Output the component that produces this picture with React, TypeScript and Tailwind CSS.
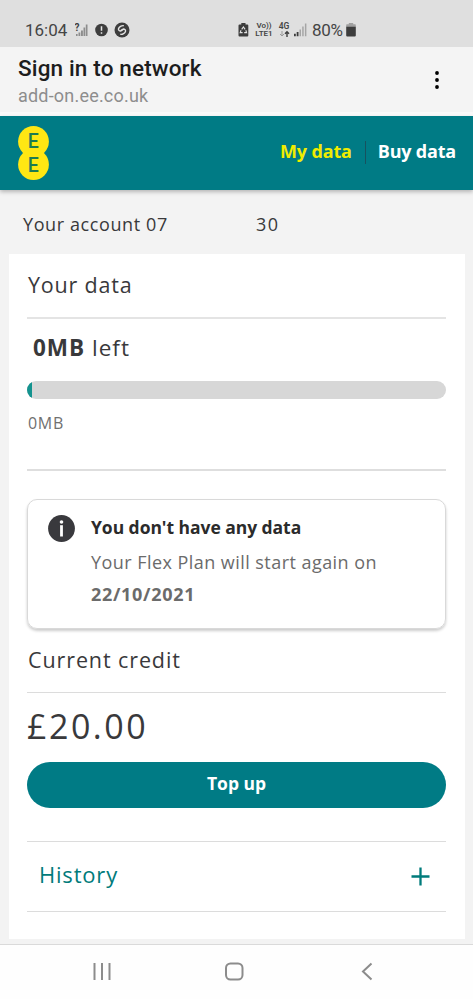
import { EllipsisVertical } from "lucide-react";

function StatusBar() {
  return (
    <div className="flex h-[47px] items-center bg-[#dfdfdf] pt-[13px] pl-[25px] text-[#454545]">
      <span className="w-[50px] text-[17px] leading-5">16:04</span>
      <svg width="13" height="14" viewBox="0 0 13 14" className="shrink-0">
        <path d="M1 12.9h1.6V11H1zM3.5 12.9V9.5h1.8v3.4zM6 12.9V7.5h1.9v5.4zM8.5 12.9V4.5h1.7v8.4zM10.8 12.9V1.5h1.7v11.4z" fill="#8d8d8d" />
        <text x="-0.5" y="7.5" fontSize="10" fontWeight="700" fill="#3d3d3d">?</text>
      </svg>
      <svg width="13" height="14" viewBox="0 0 13 14" className="ml-[7px] shrink-0">
        <circle cx="6.5" cy="7" r="6.3" fill="#3d3d3d" />
        <path d="M6.5 3.3v4.4M6.5 9.3v1.4" stroke="#e9e9e9" strokeWidth="1.5" />
      </svg>
      <svg width="16" height="16" viewBox="0 0 16 16" className="ml-[6px] shrink-0">
        <circle cx="8" cy="8" r="7.5" fill="#3d3d3d" />
        <path d="M9.8 3.7C7.6 3.3 5 5 4.5 6.8c-.4 1.5 1.2 2.5 2.5 2 .9-.3 1.7-1 2.5-1.6M6.3 12.3c2.2.4 4.8-1.2 5.2-3 .4-1.6-1.2-2.6-2.5-2.1-.9.3-1.7 1-2.5 1.6" fill="none" stroke="#e4e4e4" strokeWidth="1.4" />
      </svg>
      <svg width="11" height="14" viewBox="0 0 11 14" className="ml-[108px] shrink-0">
        <path d="M3.3 0h4.2v1.4h1.8a1 1 0 0 1 1 1v10.2a1 1 0 0 1-1 1H1.5a1 1 0 0 1-1-1V2.4a1 1 0 0 1 1-1h1.8z" fill="#3d3d3d" />
        <path d="M3.7 6.4 5.4 4l1.7 2.4M7.8 7.3l.8 2.3H6.2M4.6 9.6H2.2L3 7.3" fill="none" stroke="#e4e4e4" strokeWidth="1.1" />
      </svg>
      <div className="flex w-[30px] flex-col items-center text-[8px] leading-[8px] font-semibold">
        <span>Vo))</span>
        <span>LTE1</span>
      </div>
      <div className="flex w-[10px] flex-col items-center text-[8.5px] leading-[8px] font-semibold">
        <span>4G</span>
        <svg width="11" height="8" viewBox="0 0 11 8">
          <path d="M3 1v5M1 4l2 2 2-2" fill="none" stroke="#999" />
          <path d="M8 7V1.7M6 3.8l2-2 2 2" fill="none" stroke="#3d3d3d" strokeWidth="1.4" />
        </svg>
      </div>
      <svg width="13" height="14" viewBox="0 0 13 14" className="ml-[5px] shrink-0">
        <path d="M0 13.2v-2.5h1.8v2.5zM2.7 13.2V9h1.8v4.2z" fill="#3d3d3d" />
        <path d="M5.5 13.2V6.5H7v6.7zM8.2 13.2V3.5h1.5v9.7zM10.9 13.2V.5h1.5v12.7z" fill="#a5a5a5" />
      </svg>
      <span className="ml-[5px] w-[34px] text-[17px] leading-5 tracking-[-0.3px]">80%</span>
      <svg width="10" height="14" viewBox="0 0 10 14" className="shrink-0">
        <path d="M2.8 0h4.4v1.3h1.6c.7 0 1 .4 1 1V4H.2V2.3c0-.6.3-1 1-1h1.6z" fill="#a0a0a0" />
        <path d="M.2 3.7h9.6v8.8a1 1 0 0 1-1 1H1.2a1 1 0 0 1-1-1z" fill="#3d3d3d" />
      </svg>
    </div>
  );
}

function BrowserHeader() {
  return (
    <div className="flex h-[69px] justify-between border-b-4 border-[#fafafa] bg-[#f4f4f4] pl-[18px]">
      <div className="pt-[7px]">
        <h1 className="text-[22.5px] leading-[28px] font-medium tracking-[0.15px] whitespace-nowrap text-[#1d1d1d]">Sign in to network</h1>
        <p className="text-[18px] leading-[27px] tracking-[0.2px] text-[#8d8d8d]">add-on.ee.co.uk</p>
      </div>
      <EllipsisVertical className="mt-[21px] mr-[24px] h-[24px] w-[24px] text-black" strokeWidth={1.8} />
    </div>
  );
}

function SiteHeader() {
  return (
    <header className="relative flex h-[74px] items-center justify-between bg-[#007b85] pr-[17px] pl-[18px] shadow-[0_2px_4px_rgba(0,0,0,0.25)]">
      <svg width="31" height="54" viewBox="0 0 31 54" className="mt-[-1px] font-['Roboto',sans-serif]">
        <circle cx="15.5" cy="15.5" r="15.4" fill="#ffe713" />
        <circle cx="15.5" cy="38.5" r="15.4" fill="#ffe713" />
        <text x="15.3" y="22.3" textAnchor="middle" fontSize="19.5" fontWeight="500" fill="#1e7b52">E</text>
        <text x="15.3" y="45.8" textAnchor="middle" fontSize="19.5" fontWeight="500" fill="#1e7b52">E</text>
      </svg>
      <nav className="flex items-center pb-[4px] text-[18px] leading-6 font-bold whitespace-nowrap">
        <a className="tracking-[-0.15px] text-[#f0ec00]">My data</a>
        <span className="mt-[2px] mr-[12px] ml-[13px] h-[23px] w-px bg-[#17525f]" />
        <a className="tracking-[-0.2px] text-white">Buy data</a>
      </nav>
    </header>
  );
}

function UsageSection() {
  return (
    <section className="h-[217px] border-b-2 border-[#dedede]">
      <h2 className="h-[65px] border-b-2 border-[#e4e4e4] pt-[16px] pl-px text-[21.5px] leading-[30px] tracking-[0.8px]">Your data</h2>
      <p className="h-[62px] pt-[14px] pl-[6px] text-[22.5px] leading-[30px] tracking-[1px]">
        <b className="font-bold">0MB</b> left
      </p>
      <div className="h-[18px] overflow-hidden rounded-full bg-[#d7d7d7]">
        <div className="h-full w-[5px] bg-[#14938f]" />
      </div>
      <p className="pt-[12px] pl-px text-[16px] leading-6 tracking-[0.7px] text-[#707070]">0MB</p>
    </section>
  );
}

function DataAlert() {
  return (
    <div className="mt-[28px] flex h-[130px] rounded-[10px] border border-[#d9d9d9] pt-[12px] pl-[20px] shadow-[0_2px_3px_rgba(0,0,0,0.2)]">
      <svg width="27" height="27" viewBox="0 0 27 27" className="mt-[3px] shrink-0">
        <circle cx="13.5" cy="13.5" r="13.4" fill="#39393d" />
        <path d="M13.5 10.2v11.3" stroke="#fff" strokeWidth="2.8" />
        <circle cx="13.5" cy="7" r="1.8" fill="#fff" />
      </svg>
      <div className="ml-[16px] text-[18px] whitespace-nowrap text-[#6b6b6b]">
        <p className="mb-[3px] text-[17.5px] leading-[31px] font-bold tracking-[-0.05px] text-[#2b2b2b]">You don't have any data</p>
        <p className="leading-[33px] tracking-[0.45px]">Your Flex Plan will start again on</p>
        <p className="leading-[31px] font-bold tracking-[0.7px]">22/10/2021</p>
      </div>
    </div>
  );
}

function CreditSection() {
  return (
    <section>
      <h2 className="h-[64px] border-b border-[#dcdcdc] pt-[16px] pl-px text-[21.5px] leading-[30px] tracking-[0.9px]">Current credit</h2>
      <p className="h-[69px] pt-[10px] text-[34px] leading-[46px] tracking-[2.5px]">£20.00</p>
      <button className="block h-[46px] w-full rounded-full bg-[#007b85] pb-[3px] text-[17.5px] font-bold text-white">Top up</button>
    </section>
  );
}

function HistoryRow() {
  return (
    <div className="mt-[33px] flex h-[71px] items-center justify-between border-y border-[#dcdcdc] pr-[16px] pl-[12px] text-[#007b7b]">
      <span className="pb-[5px] text-[22px] leading-[30px] tracking-[0.8px]">History</span>
      <svg width="19" height="19" viewBox="0 0 19 19" className="mt-[-1px]">
        <path d="M9.5 .5v18M.5 9.5h18" stroke="currentColor" strokeWidth="2.3" />
      </svg>
    </div>
  );
}

function NavigationBar() {
  return (
    <div className="h-[55px] border-t border-[#dadada] bg-[#fefefe] pt-[17px] pl-[92px]">
      <svg width="283" height="20" viewBox="0 0 283 20" fill="none" stroke="#8c8c8c" strokeWidth="2">
        <path d="M2.5 1v17M10 1v17M17.5 1v17" />
        <rect x="134" y="1.5" width="16.5" height="16" rx="4.5" />
        <path d="M279.5 1.5l-8.5 8 8.5 8" />
      </svg>
    </div>
  );
}

export default function App() {
  return (
    <div className="flex h-[999px] w-[473px] flex-col overflow-hidden bg-[#f3f3f3] font-['Roboto',sans-serif]">
      <StatusBar />
      <BrowserHeader />
      <div className="flex flex-1 flex-col font-['Open_Sans',sans-serif] text-[#39393b]">
        <SiteHeader />
        <div className="flex h-[64px] pt-[19px] pl-[23px] text-[18px] leading-[30px] tracking-[0.6px]">
          <span className="w-[233px]">Your account 07</span>
          <span className="tracking-[1.5px]">30</span>
        </div>
        <main className="mr-[8px] ml-[9px] h-[685px] bg-white pr-[19px] pl-[18px]">
          <UsageSection />
          <DataAlert />
          <CreditSection />
          <HistoryRow />
        </main>
      </div>
      <NavigationBar />
    </div>
  );
}
